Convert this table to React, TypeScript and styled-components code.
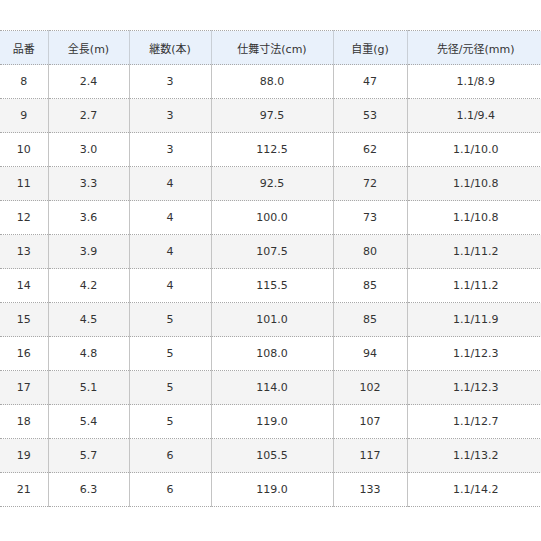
import React from "react";
import styled, { createGlobalStyle } from "styled-components";

const Global = createGlobalStyle`
  html, body { margin: 0; padding: 0; background: #fff; overflow: hidden; }
  body { font-family: "DejaVu Sans", "Noto Sans CJK JP", sans-serif; }
`;

const Page = styled.div`
  padding-top: 30px;
  width: 541px;
  overflow: hidden;
`;

const Table = styled.table`
  border-collapse: collapse;
  table-layout: fixed;
  width: 544px;
  font-size: 11px;
  color: #333;
`;

const HeadCell = styled.th`
  height: 33px;
  padding: 0;
  font-weight: normal;
  text-align: center;
  background: #e9f1fb;
  border-top: 1px dotted #a8a8a8;
  border-bottom: 1px dotted #a8a8a8;
  border-left: 1px solid #c9cfd6;
  &:first-child { border-left: none; }
  &:last-child { border-right: none; }
`;

const Row = styled.tr<{ $alt: boolean }>`
  background: ${(p) => (p.$alt ? "#f4f4f4" : "#ffffff")};
`;

const Cell = styled.td`
  height: 33px;
  padding: 0;
  text-align: center;
  border-bottom: 1px dotted #a8a8a8;
  border-left: 1px solid #c4c4c4;
  &:first-child { border-left: none; }
`;

const widths = [48, 81, 82, 122, 74, 137];
const headers = ["品番", "全長(m)", "継数(本)", "仕舞寸法(cm)", "自重(g)", "先径/元径(mm)"];
const rows: string[][] = [
  ["8", "2.4", "3", "88.0", "47", "1.1/8.9"],
  ["9", "2.7", "3", "97.5", "53", "1.1/9.4"],
  ["10", "3.0", "3", "112.5", "62", "1.1/10.0"],
  ["11", "3.3", "4", "92.5", "72", "1.1/10.8"],
  ["12", "3.6", "4", "100.0", "73", "1.1/10.8"],
  ["13", "3.9", "4", "107.5", "80", "1.1/11.2"],
  ["14", "4.2", "4", "115.5", "85", "1.1/11.2"],
  ["15", "4.5", "5", "101.0", "85", "1.1/11.9"],
  ["16", "4.8", "5", "108.0", "94", "1.1/12.3"],
  ["17", "5.1", "5", "114.0", "102", "1.1/12.3"],
  ["18", "5.4", "5", "119.0", "107", "1.1/12.7"],
  ["19", "5.7", "6", "105.5", "117", "1.1/13.2"],
  ["21", "6.3", "6", "119.0", "133", "1.1/14.2"],
];

export default function App() {
  return (
    <Page>
      <Global />
      <Table>
        <colgroup>
          {widths.map((w, i) => (
            <col key={i} style={{ width: w }} />
          ))}
        </colgroup>
        <thead>
          <tr>
            {headers.map((h) => (
              <HeadCell key={h}>{h}</HeadCell>
            ))}
          </tr>
        </thead>
        <tbody>
          {rows.map((r, i) => (
            <Row key={r[0]} $alt={i % 2 === 1}>
              {r.map((c, j) => (
                <Cell key={j}>{c}</Cell>
              ))}
            </Row>
          ))}
        </tbody>
      </Table>
    </Page>
  );
}
